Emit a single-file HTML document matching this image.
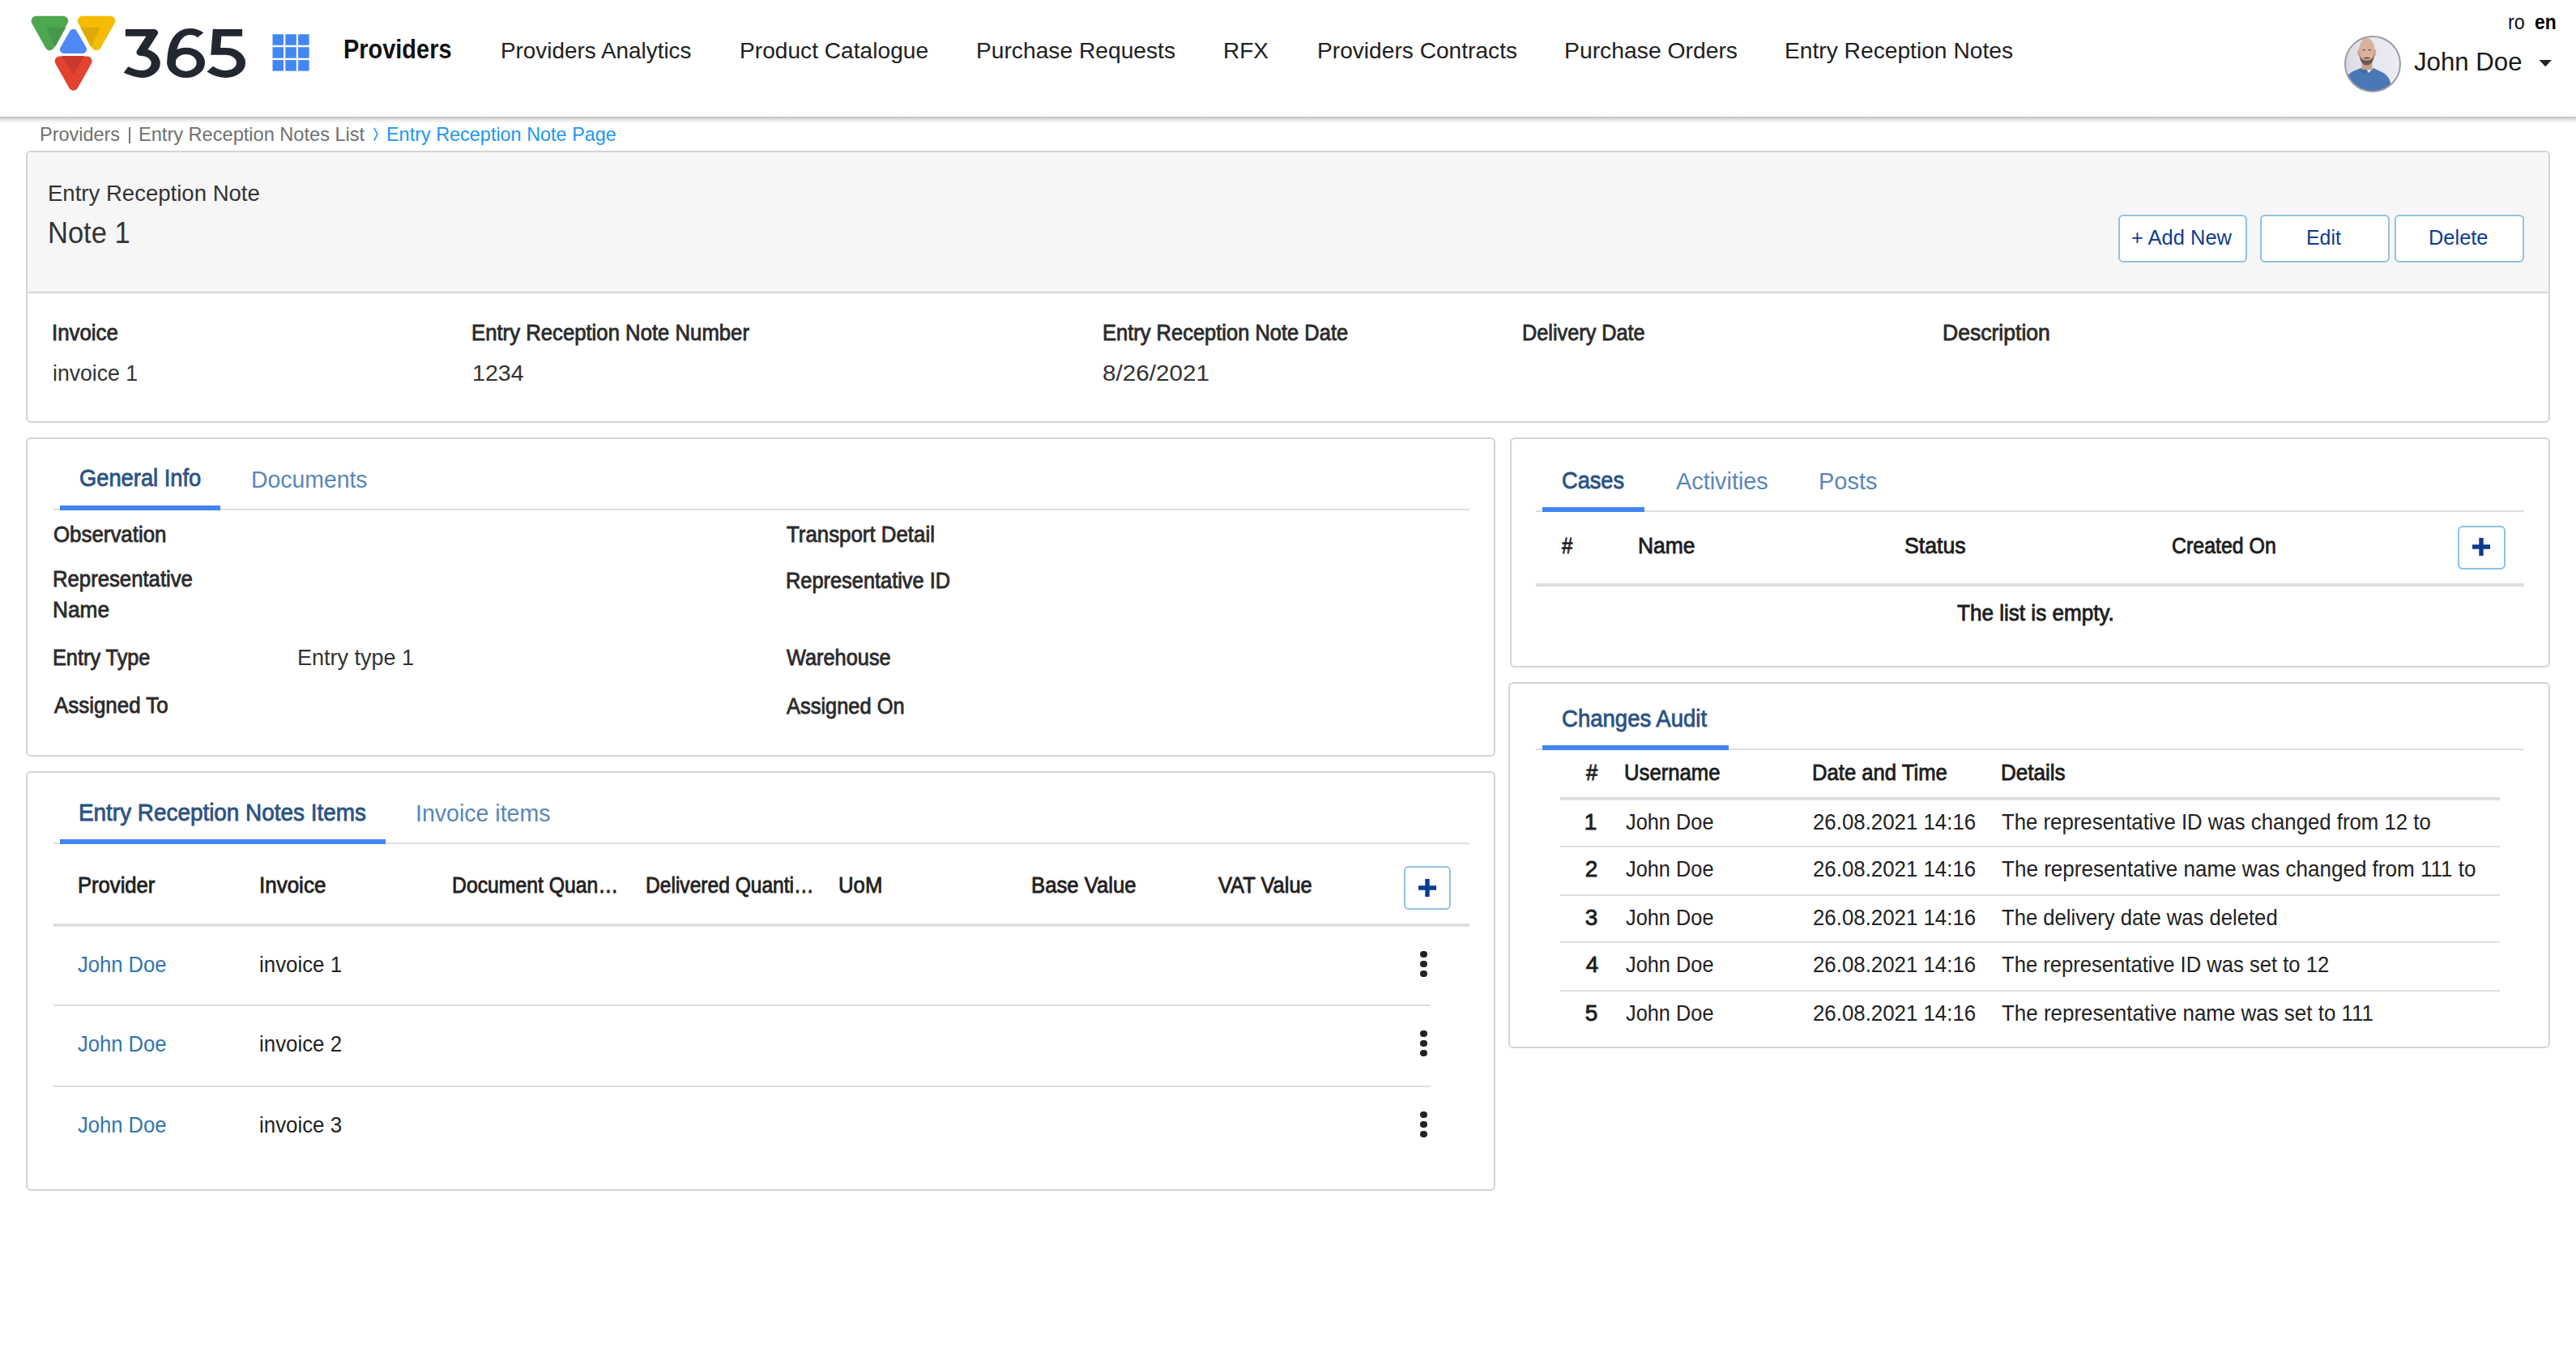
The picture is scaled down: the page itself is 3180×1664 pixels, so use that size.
<!DOCTYPE html>
<html><head><meta charset="utf-8">
<style>
html,body{margin:0;padding:0;background:#fff;width:3180px;height:1664px;overflow:hidden;position:relative;font-family:"Liberation Sans",sans-serif;}
.t{position:absolute;white-space:nowrap;transform-origin:0 0;font-family:"Liberation Sans",sans-serif;}
.a{position:absolute;box-sizing:border-box;}
.card{position:absolute;box-sizing:border-box;border:2px solid #d4d4d4;border-radius:6px;background:#fff;}
.hl{position:absolute;background:#dedede;}
.ul{position:absolute;background:#4285f4;}
.btn{position:absolute;box-sizing:border-box;border:2px solid #91c2de;border-radius:6px;background:#fff;}
.dot{position:absolute;width:8.6px;height:8.6px;border-radius:50%;background:#222;margin:0.2px 0 0 0.2px}
</style></head><body>
<!-- header shadow -->
<div class="a" style="left:0;top:144px;width:3180px;height:9px;background:linear-gradient(#bababa,#d6d6d6 25%,#efefef 55%,#fbfbfb 85%,#fdfdfd)"></div>
<!-- logo -->
<svg class="a" style="left:0;top:0" width="400" height="144" viewBox="0 0 400 144">
  <defs>
    <clipPath id="cg"><polygon points="44.6,25.8 78.2,25.8 61.4,56.2" stroke="#000" stroke-width="12" stroke-linejoin="round"/></clipPath>
  </defs>
  <g stroke-linejoin="round">
    <polygon points="44.6,25.8 78.2,25.8 61.4,56.2" fill="#4ca74f" stroke="#4ca74f" stroke-width="12"/>
    <polygon points="101.9,25.8 136.2,25.8 119,56.2" fill="#f4bc04" stroke="#f4bc04" stroke-width="12"/>
    <polygon points="58.2,34.5 80.2,34.5 68.1,56.5" fill="#46994a" stroke="#46994a" stroke-width="1.5" />
    <polygon points="100.2,34.5 122.6,34.5 112.3,56.6" fill="#e0ab05" stroke="#e0ab05" stroke-width="1.5"/>
    <polygon points="78.9,60.9 102.1,60.9 90.5,40.9" fill="#4e89f7" stroke="#4e89f7" stroke-width="10"/>
    <polygon points="73.7,75.5 107.6,75.5 90.65,105.8" fill="#e1432f" stroke="#e1432f" stroke-width="12"/>
    <polygon points="76.5,69.6 103.5,69.6 90.4,91" fill="#c9392d" stroke="#c9392d" stroke-width="1"/>
  </g>
  <g fill="none" stroke="#232730" transform="translate(150,0) scale(1.27,1)">
    <path d="M3.86,40.3 H31.18 L18.9,64.6 H19.69 A13.54,13.45 0 0 1 19.69,91.5 C14.17,91.5 8.66,88.5 4.33,86" stroke-width="8.8" stroke-linejoin="round"/>
    <path d="M48.43,80 C48.03,52 55.9,39 66.54,39 C70.47,39 74.02,40.5 76.77,43.3" stroke-width="8.2"/>
    <ellipse cx="62.72" cy="77.4" rx="14.29" ry="14.6" stroke-width="8.2"/>
    <path d="M89.61,40.3 H117.4" stroke-width="8.8"/>
    <path d="M93.23,36 L91.5,63.45 H101.57 A14.53,14 0 0 1 101.57,91.5 C96.06,91.5 90.55,89 85.98,85.1" stroke-width="8.8" stroke-linejoin="miter"/>
  </g>
  <g fill="#4286f4">
    <rect x="336.5" y="42.3" width="13.5" height="13.5"/><rect x="352.3" y="42.3" width="13.5" height="13.5"/><rect x="368.1" y="42.3" width="13.5" height="13.5"/>
    <rect x="336.5" y="58.2" width="13.5" height="13.5"/><rect x="352.3" y="58.2" width="13.5" height="13.5"/><rect x="368.1" y="58.2" width="13.5" height="13.5"/>
    <rect x="336.5" y="74.1" width="13.5" height="13.5"/><rect x="352.3" y="74.1" width="13.5" height="13.5"/><rect x="368.1" y="74.1" width="13.5" height="13.5"/>
  </g>
</svg>
<!-- avatar -->
<svg class="a" style="left:2890px;top:40px" width="80" height="80" viewBox="0 0 80 80">
  <defs><clipPath id="av"><circle cx="39" cy="38.9" r="34"/></clipPath>
  <linearGradient id="bg" x1="0" x2="1"><stop offset="0" stop-color="#d8d8e0"/><stop offset="0.4" stop-color="#e6e6f0"/><stop offset="1" stop-color="#ececf4"/></linearGradient></defs>
  <g clip-path="url(#av)">
    <rect x="0" y="0" width="80" height="80" fill="url(#bg)"/>
    <path d="M4,80 L6,58 C8,51 14,48 22,45 L30,43 L34,50 L40,44 L46,47 C54,50 59,54 61,62 L62,80 Z" fill="#4a78b6"/>
    <path d="M22,45 L30,43 L32,49 L27,52 Z" fill="#3f6aa6"/>
    <rect x="25.5" y="34" width="13" height="12" fill="#c7a18a"/>
    <ellipse cx="31.8" cy="23" rx="9.8" ry="16" fill="#d8b29a"/>
    <ellipse cx="22.3" cy="25" rx="2" ry="4" fill="#cfa68d"/>
    <ellipse cx="41.3" cy="25" rx="2" ry="4" fill="#cfa68d"/>
    <path d="M22.5,27 C23,36 27,40.5 31.8,40.5 C36.6,40.5 40.6,36 41,27 C39,33 36,34.5 31.8,34.5 C27.6,34.5 24.5,33 22.5,27 Z" fill="#6a5a52"/>
    <path d="M27,31.5 C29,30.5 34.5,30.5 36.5,31.5 C34,33 29.5,33 27,31.5 Z" fill="#5a4a44"/>
    <rect x="26.5" y="21" width="3.5" height="1.2" fill="#5a4a44"/><rect x="33.5" y="21" width="3.5" height="1.2" fill="#5a4a44"/>
  </g>
  <circle cx="39" cy="38.9" r="34" fill="none" stroke="#9c9c9c" stroke-width="2"/>
</svg>
<div class="a" style="left:158.8px;top:157px;width:2px;height:20px;background:#767676"></div>
<!-- chevron -->
<svg class="a" style="left:455px;top:152px" width="20" height="28"><polyline points="6.8,5.8 11,13.7 6.8,21.6" fill="none" stroke="#2196f3" stroke-width="1.6"/></svg>
<!-- caret -->
<svg class="a" style="left:3130px;top:70px" width="24" height="16"><polygon points="4.5,4 20,4 12.25,12.2" fill="#222"/></svg>

<!-- top card -->
<div class="card" style="left:32px;top:186px;width:3116px;height:336px;"></div>
<div class="a" style="left:34px;top:188px;width:3112px;height:172px;background:#f6f6f6;border-radius:4px 4px 0 0"></div>
<div class="a" style="left:34px;top:360px;width:3112px;height:2px;background:#d6d6d6"></div>
<div class="btn" style="left:2614.5px;top:264.5px;width:159px;height:59px"></div>
<div class="btn" style="left:2790.3px;top:264.5px;width:159.4px;height:59px"></div>
<div class="btn" style="left:2956px;top:264.5px;width:159.8px;height:59px"></div>

<!-- general info card -->
<div class="card" style="left:32px;top:540px;width:1814px;height:394px;"></div>
<div class="hl" style="left:66px;top:628px;width:1748px;height:2px"></div>
<div class="ul" style="left:74px;top:624px;width:198px;height:6px"></div>

<!-- items card -->
<div class="card" style="left:32px;top:952px;width:1814px;height:518px;"></div>
<div class="hl" style="left:66px;top:1040px;width:1748px;height:2px"></div>
<div class="ul" style="left:74px;top:1036px;width:402px;height:6px"></div>
<div class="btn" style="left:1732.7px;top:1068.6px;width:58.3px;height:54.7px"></div>
<svg class="a" style="left:1740px;top:1075px" width="44" height="42"><path d="M22,10 V32 M11,21 H33" stroke="#0d3c8f" stroke-width="5.4"/></svg>
<div class="hl" style="left:66px;top:1140px;width:1748px;height:4px"></div>
<div class="hl" style="left:66px;top:1240px;width:1700px;height:2px"></div>
<div class="hl" style="left:66px;top:1340px;width:1700px;height:2px"></div>
<div class="dot" style="left:1753px;top:1173.5px"></div><div class="dot" style="left:1753px;top:1185.5px"></div><div class="dot" style="left:1753px;top:1197.5px"></div>
<div class="dot" style="left:1753px;top:1271.5px"></div><div class="dot" style="left:1753px;top:1283.5px"></div><div class="dot" style="left:1753px;top:1295.5px"></div>
<div class="dot" style="left:1753px;top:1371.5px"></div><div class="dot" style="left:1753px;top:1383.5px"></div><div class="dot" style="left:1753px;top:1395.5px"></div>

<!-- cases card -->
<div class="card" style="left:1864px;top:540px;width:1284px;height:284px;"></div>
<div class="hl" style="left:1896px;top:630px;width:1220px;height:2px"></div>
<div class="ul" style="left:1904px;top:626px;width:126px;height:6px"></div>
<div class="btn" style="left:3034.2px;top:648.6px;width:59.2px;height:54.5px"></div>
<svg class="a" style="left:3041px;top:654px" width="44" height="42"><path d="M22,10 V32 M11,21 H33" stroke="#0d3c8f" stroke-width="5.4"/></svg>
<div class="hl" style="left:1896px;top:720px;width:1220px;height:4px"></div>

<!-- audit card -->
<div class="card" style="left:1862px;top:842px;width:1286px;height:452px;"></div>
<div class="hl" style="left:1896px;top:924px;width:1220px;height:2px"></div>
<div class="ul" style="left:1904px;top:920px;width:230px;height:6px"></div>
<div class="hl" style="left:1926px;top:984px;width:1160px;height:4px"></div>
<div class="hl" style="left:1926px;top:1044px;width:1160px;height:2px"></div>
<div class="hl" style="left:1926px;top:1104px;width:1160px;height:2px"></div>
<div class="hl" style="left:1926px;top:1162px;width:1160px;height:2px"></div>
<div class="hl" style="left:1926px;top:1222px;width:1160px;height:2px"></div>

<span class="t" style="left:424.30px;top:43.40px;font-size:34px;line-height:34px;color:#111;font-weight:bold;transform:scaleX(0.8510);">Providers</span>
<span class="t" style="left:618.01px;top:48.70px;font-size:28px;line-height:28px;color:#212121;transform:scaleX(0.9954);">Providers Analytics</span>
<span class="t" style="left:913.49px;top:48.70px;font-size:28px;line-height:28px;color:#212121;transform:scaleX(1.0050);">Product Catalogue</span>
<span class="t" style="left:1204.99px;top:48.70px;font-size:28px;line-height:28px;color:#212121;transform:scaleX(1.0068);">Purchase Requests</span>
<span class="t" style="left:1509.80px;top:48.70px;font-size:28px;line-height:28px;color:#212121;transform:scaleX(0.9977);">RFX</span>
<span class="t" style="left:1625.99px;top:48.70px;font-size:28px;line-height:28px;color:#212121;transform:scaleX(1.0047);">Providers Contracts</span>
<span class="t" style="left:1930.98px;top:48.70px;font-size:28px;line-height:28px;color:#212121;transform:scaleX(1.0113);">Purchase Orders</span>
<span class="t" style="left:2202.99px;top:48.70px;font-size:28px;line-height:28px;color:#212121;transform:scaleX(1.0067);">Entry Reception Notes</span>
<span class="t" style="left:3096.10px;top:14.00px;font-size:26px;line-height:26px;color:#111;transform:scaleX(0.9004);">ro</span>
<span class="t" style="left:3129.12px;top:14.00px;font-size:26px;line-height:26px;color:#000;font-weight:bold;transform:scaleX(0.8784);">en</span>
<span class="t" style="left:2980.00px;top:60.00px;font-size:32px;line-height:32px;color:#1a1a1a;transform:scaleX(0.9751);">John Doe</span>
<span class="t" style="left:48.52px;top:153.80px;font-size:24px;line-height:24px;color:#707070;transform:scaleX(0.9774);">Providers</span>
<span class="t" style="left:171.42px;top:153.80px;font-size:24px;line-height:24px;color:#707070;transform:scaleX(0.9825);">Entry Reception Notes List</span>
<span class="t" style="left:476.62px;top:153.80px;font-size:24px;line-height:24px;color:#2196f3;transform:scaleX(0.9759);">Entry Reception Note Page</span>
<span class="t" style="left:58.73px;top:225.30px;font-size:28px;line-height:28px;color:#333;transform:scaleX(0.9838);">Entry Reception Note</span>
<span class="t" style="left:59.08px;top:270.00px;font-size:36px;line-height:36px;color:#333;transform:scaleX(0.9588);">Note 1</span>
<span class="t" style="left:2631.42px;top:280.40px;font-size:26px;line-height:26px;color:#0d3c8f;transform:scaleX(0.9801);">+ Add New</span>
<span class="t" style="left:2846.69px;top:280.40px;font-size:26px;line-height:26px;color:#0d3c8f;transform:scaleX(0.9569);">Edit</span>
<span class="t" style="left:2997.94px;top:280.40px;font-size:26px;line-height:26px;color:#0d3c8f;transform:scaleX(0.9780);">Delete</span>
<span class="t" style="left:64.28px;top:397.20px;font-size:28px;line-height:28px;color:#2b2b2b;transform:scaleX(0.9234);-webkit-text-stroke:0.85px #2b2b2b;">Invoice</span>
<span class="t" style="left:582.49px;top:397.20px;font-size:28px;line-height:28px;color:#2b2b2b;transform:scaleX(0.9183);-webkit-text-stroke:0.85px #2b2b2b;">Entry Reception Note Number</span>
<span class="t" style="left:1360.70px;top:397.20px;font-size:28px;line-height:28px;color:#2b2b2b;transform:scaleX(0.9103);-webkit-text-stroke:0.85px #2b2b2b;">Entry Reception Note Date</span>
<span class="t" style="left:1879.22px;top:397.20px;font-size:28px;line-height:28px;color:#2b2b2b;transform:scaleX(0.9025);-webkit-text-stroke:0.85px #2b2b2b;">Delivery Date</span>
<span class="t" style="left:2397.63px;top:397.20px;font-size:28px;line-height:28px;color:#2b2b2b;transform:scaleX(0.9485);-webkit-text-stroke:0.85px #2b2b2b;">Description</span>
<span class="t" style="left:64.75px;top:446.80px;font-size:28px;line-height:28px;color:#333;transform:scaleX(0.9501);">invoice 1</span>
<span class="t" style="left:582.76px;top:446.80px;font-size:28px;line-height:28px;color:#333;transform:scaleX(1.0215);">1234</span>
<span class="t" style="left:1361.04px;top:446.80px;font-size:28px;line-height:28px;color:#333;transform:scaleX(1.0586);">8/26/2021</span>
<span class="t" style="left:98.21px;top:575.40px;font-size:30px;line-height:30px;color:#2c5383;transform:scaleX(0.9102);-webkit-text-stroke:0.85px #2c5383;">General Info</span>
<span class="t" style="left:310.01px;top:577.20px;font-size:30px;line-height:30px;color:#5a87b8;transform:scaleX(0.9460);">Documents</span>
<span class="t" style="left:66.10px;top:645.60px;font-size:28px;line-height:28px;color:#2b2b2b;transform:scaleX(0.9236);-webkit-text-stroke:0.85px #2b2b2b;">Observation</span>
<span class="t" style="left:65.19px;top:701.00px;font-size:28px;line-height:28px;color:#2b2b2b;transform:scaleX(0.9181);-webkit-text-stroke:0.85px #2b2b2b;">Representative</span>
<span class="t" style="left:65.15px;top:738.80px;font-size:28px;line-height:28px;color:#2b2b2b;transform:scaleX(0.9367);-webkit-text-stroke:0.85px #2b2b2b;">Name</span>
<span class="t" style="left:65.22px;top:797.80px;font-size:28px;line-height:28px;color:#2b2b2b;transform:scaleX(0.9032);-webkit-text-stroke:0.85px #2b2b2b;">Entry Type</span>
<span class="t" style="left:67.02px;top:857.00px;font-size:28px;line-height:28px;color:#2b2b2b;transform:scaleX(0.9249);-webkit-text-stroke:0.85px #2b2b2b;">Assigned To</span>
<span class="t" style="left:366.77px;top:798.00px;font-size:28px;line-height:28px;color:#333;transform:scaleX(0.9644);">Entry type 1</span>
<span class="t" style="left:971.42px;top:645.60px;font-size:28px;line-height:28px;color:#2b2b2b;transform:scaleX(0.9229);-webkit-text-stroke:0.85px #2b2b2b;">Transport Detail</span>
<span class="t" style="left:969.61px;top:703.40px;font-size:28px;line-height:28px;color:#2b2b2b;transform:scaleX(0.9061);-webkit-text-stroke:0.85px #2b2b2b;">Representative ID</span>
<span class="t" style="left:971.42px;top:798.00px;font-size:28px;line-height:28px;color:#2b2b2b;transform:scaleX(0.9052);-webkit-text-stroke:0.85px #2b2b2b;">Warehouse</span>
<span class="t" style="left:971.42px;top:857.70px;font-size:28px;line-height:28px;color:#2b2b2b;transform:scaleX(0.9081);-webkit-text-stroke:0.85px #2b2b2b;">Assigned On</span>
<span class="t" style="left:97.17px;top:988.40px;font-size:30px;line-height:30px;color:#2c5383;transform:scaleX(0.9293);-webkit-text-stroke:0.85px #2c5383;">Entry Reception Notes Items</span>
<span class="t" style="left:512.50px;top:989.00px;font-size:30px;line-height:30px;color:#5a87b8;transform:scaleX(0.9508);">Invoice items</span>
<span class="t" style="left:95.50px;top:1079.20px;font-size:28px;line-height:28px;color:#222;transform:scaleX(0.9148);-webkit-text-stroke:0.85px #222;">Provider</span>
<span class="t" style="left:319.77px;top:1079.20px;font-size:28px;line-height:28px;color:#222;transform:scaleX(0.9281);-webkit-text-stroke:0.85px #222;">Invoice</span>
<span class="t" style="left:558.46px;top:1079.20px;font-size:28px;line-height:28px;color:#222;transform:scaleX(0.8848);-webkit-text-stroke:0.85px #222;">Document Quan…</span>
<span class="t" style="left:797.07px;top:1079.20px;font-size:28px;line-height:28px;color:#222;transform:scaleX(0.8778);-webkit-text-stroke:0.85px #222;">Delivered Quanti…</span>
<span class="t" style="left:1035.29px;top:1079.20px;font-size:28px;line-height:28px;color:#222;transform:scaleX(0.9186);-webkit-text-stroke:0.85px #222;">UoM</span>
<span class="t" style="left:1273.09px;top:1079.20px;font-size:28px;line-height:28px;color:#222;transform:scaleX(0.9184);-webkit-text-stroke:0.85px #222;">Base Value</span>
<span class="t" style="left:1504.22px;top:1079.20px;font-size:28px;line-height:28px;color:#222;transform:scaleX(0.9111);-webkit-text-stroke:0.85px #222;">VAT Value</span>
<span class="t" style="left:96.40px;top:1177.20px;font-size:28px;line-height:28px;color:#3274b4;transform:scaleX(0.9137);">John Doe</span>
<span class="t" style="left:320.48px;top:1177.20px;font-size:28px;line-height:28px;color:#222;transform:scaleX(0.9235);">invoice 1</span>
<span class="t" style="left:96.40px;top:1275.40px;font-size:28px;line-height:28px;color:#3274b4;transform:scaleX(0.9137);">John Doe</span>
<span class="t" style="left:320.48px;top:1275.40px;font-size:28px;line-height:28px;color:#222;transform:scaleX(0.9235);">invoice 2</span>
<span class="t" style="left:96.40px;top:1374.80px;font-size:28px;line-height:28px;color:#3274b4;transform:scaleX(0.9137);">John Doe</span>
<span class="t" style="left:320.48px;top:1374.80px;font-size:28px;line-height:28px;color:#222;transform:scaleX(0.9235);">invoice 3</span>
<span class="t" style="left:1928.32px;top:577.80px;font-size:30px;line-height:30px;color:#2c5383;transform:scaleX(0.9063);-webkit-text-stroke:0.85px #2c5383;">Cases</span>
<span class="t" style="left:2068.70px;top:579.00px;font-size:30px;line-height:30px;color:#5a87b8;transform:scaleX(0.9612);">Activities</span>
<span class="t" style="left:2245.37px;top:579.00px;font-size:30px;line-height:30px;color:#5a87b8;transform:scaleX(0.9649);">Posts</span>
<span class="t" style="left:1927.83px;top:660.00px;font-size:28px;line-height:28px;color:#1d1d1d;transform:scaleX(0.8594);-webkit-text-stroke:0.85px #1d1d1d;">#</span>
<span class="t" style="left:2021.54px;top:660.00px;font-size:28px;line-height:28px;color:#1d1d1d;transform:scaleX(0.9450);-webkit-text-stroke:0.85px #1d1d1d;">Name</span>
<span class="t" style="left:2350.87px;top:660.00px;font-size:28px;line-height:28px;color:#1d1d1d;transform:scaleX(0.9531);-webkit-text-stroke:0.85px #1d1d1d;">Status</span>
<span class="t" style="left:2680.83px;top:660.00px;font-size:28px;line-height:28px;color:#1d1d1d;transform:scaleX(0.8901);-webkit-text-stroke:0.85px #1d1d1d;">Created On</span>
<span class="t" style="left:2416.43px;top:743.40px;font-size:28px;line-height:28px;color:#1d1d1d;transform:scaleX(0.9319);-webkit-text-stroke:0.85px #1d1d1d;">The list is empty.</span>
<span class="t" style="left:1928.31px;top:871.60px;font-size:30px;line-height:30px;color:#2c5383;transform:scaleX(0.9180);-webkit-text-stroke:0.85px #2c5383;">Changes Audit</span>
<span class="t" style="left:1957.72px;top:940.00px;font-size:28px;line-height:28px;color:#1d1d1d;transform:scaleX(0.9156);-webkit-text-stroke:0.85px #1d1d1d;">#</span>
<span class="t" style="left:2004.59px;top:940.00px;font-size:28px;line-height:28px;color:#1d1d1d;transform:scaleX(0.9176);-webkit-text-stroke:0.85px #1d1d1d;">Username</span>
<span class="t" style="left:2237.19px;top:940.00px;font-size:28px;line-height:28px;color:#1d1d1d;transform:scaleX(0.9157);-webkit-text-stroke:0.85px #1d1d1d;">Date and Time</span>
<span class="t" style="left:2469.56px;top:940.00px;font-size:28px;line-height:28px;color:#1d1d1d;transform:scaleX(0.9305);-webkit-text-stroke:0.85px #1d1d1d;">Details</span>
<span class="t" style="left:1955.72px;top:1001.00px;font-size:28px;line-height:28px;color:#1d1d1d;-webkit-text-stroke:0.85px #1d1d1d;">1</span>
<span class="t" style="left:2007.00px;top:1001.00px;font-size:28px;line-height:28px;color:#222;transform:scaleX(0.9054);">John Doe</span>
<span class="t" style="left:2237.68px;top:1001.00px;font-size:28px;line-height:28px;color:#222;transform:scaleX(0.9228);">26.08.2021 14:16</span>
<span class="t" style="left:2471.00px;top:1001.00px;font-size:28px;line-height:28px;color:#222;transform:scaleX(0.9199);">The representative ID was changed from 12 to</span>
<span class="t" style="left:1956.72px;top:1059.40px;font-size:28px;line-height:28px;color:#1d1d1d;-webkit-text-stroke:0.85px #1d1d1d;">2</span>
<span class="t" style="left:2007.00px;top:1059.40px;font-size:28px;line-height:28px;color:#222;transform:scaleX(0.9054);">John Doe</span>
<span class="t" style="left:2237.68px;top:1059.40px;font-size:28px;line-height:28px;color:#222;transform:scaleX(0.9228);">26.08.2021 14:16</span>
<span class="t" style="left:2471.00px;top:1059.40px;font-size:28px;line-height:28px;color:#222;transform:scaleX(0.9304);">The representative name was changed from 111 to</span>
<span class="t" style="left:1956.72px;top:1119.20px;font-size:28px;line-height:28px;color:#1d1d1d;-webkit-text-stroke:0.85px #1d1d1d;">3</span>
<span class="t" style="left:2007.00px;top:1119.20px;font-size:28px;line-height:28px;color:#222;transform:scaleX(0.9054);">John Doe</span>
<span class="t" style="left:2237.68px;top:1119.20px;font-size:28px;line-height:28px;color:#222;transform:scaleX(0.9228);">26.08.2021 14:16</span>
<span class="t" style="left:2471.00px;top:1119.20px;font-size:28px;line-height:28px;color:#222;transform:scaleX(0.9157);">The delivery date was deleted</span>
<span class="t" style="left:1957.72px;top:1177.00px;font-size:28px;line-height:28px;color:#1d1d1d;-webkit-text-stroke:0.85px #1d1d1d;">4</span>
<span class="t" style="left:2007.00px;top:1177.00px;font-size:28px;line-height:28px;color:#222;transform:scaleX(0.9054);">John Doe</span>
<span class="t" style="left:2237.68px;top:1177.00px;font-size:28px;line-height:28px;color:#222;transform:scaleX(0.9228);">26.08.2021 14:16</span>
<span class="t" style="left:2471.00px;top:1177.00px;font-size:28px;line-height:28px;color:#222;transform:scaleX(0.9145);">The representative ID was set to 12</span>
<span class="t" style="left:1956.72px;top:1237.00px;font-size:28px;line-height:28px;color:#1d1d1d;-webkit-text-stroke:0.85px #1d1d1d;">5</span>
<span class="t" style="left:2007.00px;top:1237.00px;font-size:28px;line-height:28px;color:#222;transform:scaleX(0.9054);">John Doe</span>
<span class="t" style="left:2237.68px;top:1237.00px;font-size:28px;line-height:28px;color:#222;transform:scaleX(0.9228);">26.08.2021 14:16</span>
<span class="t" style="left:2471.00px;top:1237.00px;font-size:28px;line-height:28px;color:#222;transform:scaleX(0.9263);">The representative name was set to 111</span>
<div class="a" style="left:1870px;top:1262px;width:1270px;height:28px;background:#fff"></div>
</body></html>
